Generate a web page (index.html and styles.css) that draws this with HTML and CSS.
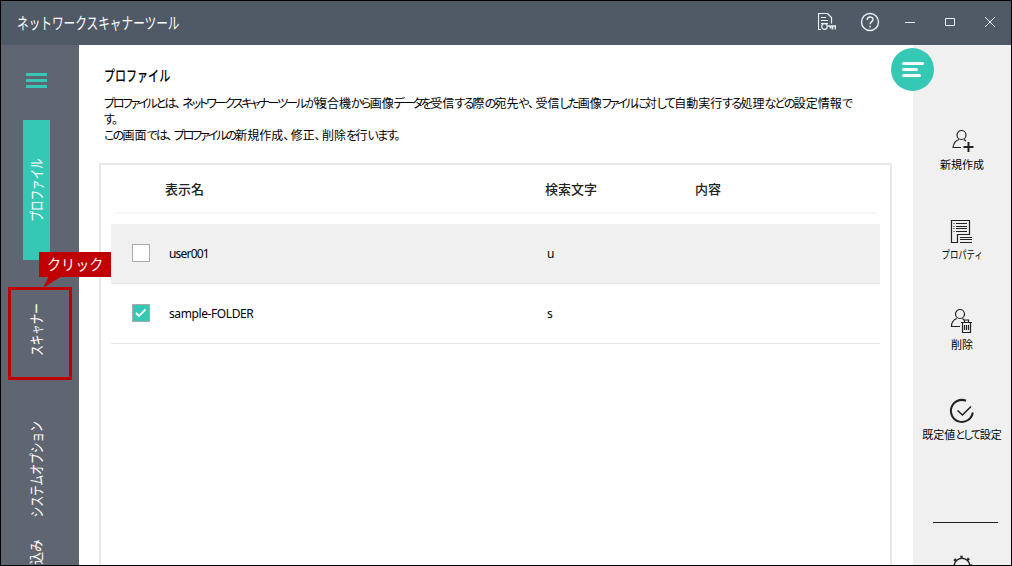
FILE: index.html
```html
<!DOCTYPE html>
<html lang="ja">
<head>
    <meta charset="UTF-8">
    <meta name="viewport" content="width=device-width, initial-scale=1.0">
    <title>ネットワークスキャナーツール</title>
    <link rel="stylesheet" href="styles.css">
</head>
<body>
    <div class="window">
        <header class="titlebar">
            <div class="app-title"><span>ネットワークスキャナーツール</span></div>
            <div class="window-buttons">
                <svg class="license" width="18" height="18" viewBox="0 0 18 18">
                    <path d="M3 16.500H.5V.5h9l4 4v6M3 4.500h5M3 7.500h7M3 10.500h7" />
                    <circle cx="6.500" cy="13.500" r="2.800" />
                    <path class="key" d="M9.500 13h8v3.500M14.500 13v3.500M12.500 13v2.500" />
                </svg>
                <svg class="help" width="20" height="20" viewBox="0 0 20 20">
                    <circle cx="10" cy="10" r="8.500" />
                    <path d="M7.200 8C7.200 4 13 4.200 13 7.600C13 9.800 10 9.900 10 12.200M10 13.800v1.700" />
                </svg>
                <svg width="10" height="10" viewBox="0 0 10 10"><path d="M0 5.500h10" /></svg>
                <svg width="10" height="10" viewBox="0 0 10 10"><path d="M.5 1.500h9v7h-9z" /></svg>
                <svg width="10" height="10" viewBox="0 0 10 10"><path d="M0 0l10 10M10 0L0 10" /></svg>
            </div>
        </header>

        <div class="main">
            <nav class="sidebar">
                <div class="hamburger"><i></i><i></i><i></i></div>
                <a class="tab active"><span>プロファイル</span></a>
                <a class="tab scanner"><span>スキャナー</span></a>
                <a class="tab option"><span>システムオプション</span></a>
                <a class="tab import"><span>込み</span></a>
            </nav>

            <section class="content">
                <h1><span>プロファイル</span></h1>
                <p class="desc"><span class="kata">プロファイル</span><span class="kana">とは<span class="comma">、</span></span><span class="kata">ネットワークスキャナーツール</span><span class="kana">が</span>複合機<span class="kana">から</span>画像<span class="kata">データ</span><span class="kana">を</span>受信<span class="kana">する</span>際<span class="kana">の</span>宛先<span class="kana">や<span class="comma">、</span></span>受信<span class="kana">した</span>画像<span class="kata">ファイル</span><span class="kana">に</span>対<span class="kana">して</span>自動実行<span class="kana">する</span>処理<span class="kana">などの</span>設定情報<span class="kana">で</span><br><span class="kana">す。</span><br><span class="kana">この</span>画面<span class="kana">では<span class="comma">、</span></span><span class="kata">プロファイル</span><span class="kana">の</span>新規作成<span class="comma">、</span>修正<span class="comma">、</span>削除<span class="kana">を</span>行<span class="kana">います。</span></p>

                <div class="list">
                    <div class="list-head">
                        <div>表示名</div>
                        <div>検索文字</div>
                        <div>内容</div>
                    </div>
                    <div class="row selected">
                        <span class="check"></span>
                        <span class="name user">user001</span>
                        <span>u</span>
                    </div>
                    <div class="row">
                        <span class="check on"><svg width="16" height="16" viewBox="0 0 16 16"><path d="M3 8l3 3L12.500 4.500" /></svg></span>
                        <span class="name">sample-FOLDER</span>
                        <span>s</span>
                    </div>
                </div>
            </section>

            <aside class="actions">
                <div class="action">
                    <svg width="24" height="24" viewBox="0 0 24 24">
                        <circle cx="11.500" cy="6" r="4.500" />
                        <path d="M11 18.500H3C3.500 14 6 11.500 9 10.500M14 10.500l2 1.500" />
                        <path class="bold" d="M18.500 13v10M13.500 18h10" />
                    </svg>
                    <span class="label">新規作成</span>
                </div>
                <div class="action">
                    <svg width="24" height="24" viewBox="0 0 24 24">
                        <path d="M7.500 23.500h-6v-22h18v14h-12zM3.500 4.500h1M6 4.500h11M3.500 7.500h1M6 7.500h11M3.500 9.500h1M6 9.500h11M3.500 12.500h1M6 12.500h11M10 18.500h12M10 20.500h12M10 23.500h12M7.500 15.500v8" />
                    </svg>
                    <span class="label kata-label">プロパティ</span>
                </div>
                <div class="action">
                    <svg width="24" height="26" viewBox="0 0 24 26">
                        <circle cx="10" cy="6" r="4.500" />
                        <path d="M10 18.500H1.500C1.500 14 4 11.500 7 10.500M12.500 10.500l1.500 1.500M11 14.500h11M14.500 14v-2h4v2M12.500 14.500v10h8v-10M14.500 17v5M16.500 17v5M18.500 17v5" />
                    </svg>
                    <span class="label">削除</span>
                </div>
                <div class="action">
                    <svg width="26" height="26" viewBox="0 0 26 26">
                        <path class="ring" d="M17 2.700A11 11 0 1 0 23.800 14.500" />
                        <path class="tick" d="M8.500 12.500l5 4.500L22 8.500" />
                    </svg>
                    <span class="label default">既定値<b>として</b>設定</span>
                </div>
                <div class="divider"></div>
                <svg class="gear" width="22" height="22" viewBox="0 0 22 22">
                    <circle cx="11" cy="11" r="7.800" />
                    <circle class="teeth" cx="11" cy="11" r="9.300" />
                </svg>
            </aside>
        </div>

        <div class="menu-button"><i></i><i></i><i></i></div>
        <div class="highlight"></div>
        <div class="callout"><span>クリック</span></div>
        <svg class="callout-tail" width="20" height="12" viewBox="0 0 20 12"><path d="M6 0h13L0 12z" /></svg>
    </div>
</body>
</html>
```

FILE: styles.css
```css
* {
    box-sizing: border-box;
}

body {
    margin: 0;
    font-family: "Noto Sans CJK JP", sans-serif;
    font-size: 12px;
    color: #000;
}

.window {
    position: relative;
    width: 1012px;
    height: 566px;
    border: 1px solid #000;
    background: #fff;
    overflow: hidden;
    display: flex;
    flex-direction: column;
}

svg {
    display: block;
    fill: none;
    flex: none;
}

/* title bar */
.titlebar {
    height: 44px;
    flex: none;
    background: #4f5a66;
    display: flex;
    align-items: center;
    justify-content: space-between;
    padding: 0 16px 2px;
}

.app-title {
    color: #fff;
    font-size: 16px;
    white-space: nowrap;
}

.app-title span,
h1 span,
.callout span {
    display: inline-block;
    transform-origin: left center;
}

.app-title span {
    transform: scaleX(0.728);
}

.window-buttons {
    display: flex;
    align-items: center;
    gap: 30px;
}

.window-buttons svg {
    stroke: #e8f0f5;
    stroke-width: 1;
}

.window-buttons .license {
    margin-right: -6px;
    stroke-width: 1.2;
}

.license .key {
    stroke-width: 1.6;
}

.window-buttons .help {
    stroke-width: 1.4;
    margin-right: -5px;
}

.main {
    flex: 1;
    min-height: 0;
    display: flex;
}

/* left tabs */
.sidebar {
    width: 78px;
    flex: none;
    background: #5f6671;
    display: flex;
    flex-direction: column;
    padding-top: 28px;
    overflow: hidden;
}

.hamburger {
    display: flex;
    flex-direction: column;
    gap: 3px;
    margin: 0 0 32px 25px;
}

.hamburger i {
    width: 21px;
    height: 3px;
    background: #34c8b5;
}

.tab {
    flex: none;
    width: 27px;
    margin-left: 22px;
    padding-right: 3px;
    color: #fff;
    font-size: 15px;
    display: flex;
    align-items: center;
    justify-content: center;
}

.tab span {
    writing-mode: vertical-rl;
    text-orientation: sideways;
    white-space: nowrap;
    line-height: 27px;
    transform: rotate(180deg) scaleY(0.7);
}

.tab.active {
    height: 140px;
    background: #34c8b5;
}

.tab.scanner {
    height: 140px;
}

.tab.option {
    height: 138px;
}

.tab.option span {
    transform: rotate(180deg) scaleY(0.715);
}

.tab.import {
    height: 28px;
}

.tab.import span {
    font-size: 14px;
    transform: rotate(180deg) scaleY(0.9);
}

/* profile list */
.content {
    flex: 1;
    min-width: 0;
    display: flex;
    flex-direction: column;
    padding: 18px 21px 0 20px;
}

h1 {
    margin: 0 0 8px 5px;
    font-size: 15px;
    line-height: 24px;
    font-weight: 500;
}

h1 span {
    transform: scaleX(0.735);
}

.desc {
    margin: 0 0 19px 5px;
    height: 49px;
    line-height: 16px;
    white-space: nowrap;
    font-feature-settings: "palt";
}

.kata {
    letter-spacing: -2.1px;
}

.kana {
    letter-spacing: -1.7px;
}

.comma {
    letter-spacing: 1.4px;
}

.list {
    flex: 1;
    border: 2px solid #e7e7e7;
    border-bottom: 0;
    padding: 0 10px;
}

.list-head {
    display: grid;
    grid-template-columns: 380px 150px 1fr;
    height: 49px;
    margin: 0 3px 10px;
    padding-left: 51px;
    border-bottom: 2px solid #f8f8f8;
    line-height: 47px;
    font-size: 13px;
    font-weight: 500;
    color: #222;
}

.row {
    height: 60px;
    display: grid;
    grid-template-columns: 37px 378px 1fr;
    align-items: center;
    padding-left: 21px;
    border-bottom: 1px solid #e5e5e5;
    font-family: "Noto Sans", sans-serif;
}

.row.selected {
    background: #f0f0f0;
}

.check {
    width: 18px;
    height: 18px;
    margin-bottom: 2px;
    border: 1px solid #aaa;
    background: #fff;
}

.check.on {
    background: #34c8b5;
}

.check path {
    stroke: #fff;
    stroke-width: 1.8;
}

.name {
    letter-spacing: -0.4px;
}

.name.user {
    letter-spacing: -0.8px;
}

/* right action pane */
.actions {
    width: 98px;
    flex: none;
    background: #f0f0f0;
    display: flex;
    flex-direction: column;
    align-items: center;
    padding-top: 83px;
    overflow: hidden;
}

.action {
    height: 90px;
    flex: none;
    display: flex;
    flex-direction: column;
    align-items: center;
    stroke: #222;
    stroke-width: 1.2;
}

.action svg {
    height: 26px;
}

.action .bold,
.action .ring {
    stroke-width: 2;
}

.action .tick {
    stroke-width: 1.6;
}

.label {
    margin-top: 2px;
    line-height: 16px;
    font-size: 11px;
    white-space: nowrap;
    stroke: none;
}

.kata-label {
    transform: scaleX(0.76);
}

.label b {
    font-weight: normal;
    font-feature-settings: "palt";
    letter-spacing: -1.5px;
}

.divider {
    width: 65px;
    height: 1px;
    flex: none;
    margin: 34px 0 32px 6px;
    background: #222;
}

.gear {
    stroke: #222;
    stroke-width: 1.5;
}

.gear .teeth {
    stroke-width: 2;
    stroke-dasharray: 2.5 4.8;
    stroke-dashoffset: 2;
}

/* floating menu button over the pane edge */
.menu-button {
    position: absolute;
    left: 890px;
    top: 47px;
    width: 43px;
    height: 43px;
    border-radius: 50%;
    background: #34c8b5;
    display: flex;
    flex-direction: column;
    gap: 3px;
    padding: 14px 0 0 11px;
}

.menu-button i {
    width: 22px;
    height: 3px;
    border-radius: 1.5px;
    background: #fff;
}

.menu-button i:nth-child(2) {
    width: 16px;
}

.menu-button i:nth-child(3) {
    width: 19px;
}

/* click annotation */
.highlight {
    position: absolute;
    left: 7px;
    top: 286px;
    width: 64px;
    height: 93px;
    border: 3px solid #c00000;
}

.callout {
    position: absolute;
    left: 38px;
    top: 251px;
    width: 72px;
    height: 25px;
    padding-left: 8px;
    line-height: 24px;
    background: #c00000;
    color: #fff;
    font-size: 15px;
    white-space: nowrap;
}

.callout span {
    transform: scaleX(0.94);
}

.callout-tail {
    position: absolute;
    left: 42px;
    top: 275px;
    fill: #c00000;
}
```
